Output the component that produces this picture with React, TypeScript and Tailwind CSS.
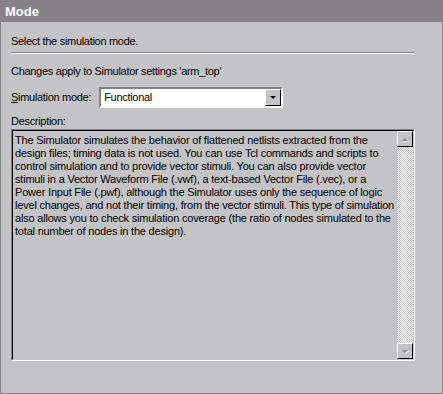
const lines = [
  'The Simulator simulates the behavior of flattened netlists extracted from the',
  'design files; timing data is not used. You can use Tcl commands and scripts to',
  'control simulation and to provide vector stimuli. You can also provide vector',
  'stimuli in a Vector Waveform File (.vwf), a text-based Vector File (.vec), or a',
  'Power Input File (.pwf), although the Simulator uses only the sequence of logic',
  'level changes, and not their timing, from the vector stimuli. This type of simulation',
  'also allows you to check simulation coverage (the ratio of nodes simulated to the',
  'total number of nodes in the design).',
];

function Arrow({ up, disabled }: { up?: boolean; disabled?: boolean }) {
  const pts = up ? '1,4 7,4 4,1' : '1,1 7,1 4,4';
  return (
    <svg width="8" height="5" viewBox="0 0 8 5">
      {disabled && <polygon points={pts} fill="#ffffff" transform="translate(1,1)" />}
      <polygon points={pts} fill={disabled ? '#858385' : '#000000'} />
    </svg>
  );
}

function ScrollButton({ up }: { up?: boolean }) {
  return (
    <div className="w-[16px] h-[16px] bg-[#c4c3c6] border border-t-white border-l-white border-r-black border-b-black flex items-center justify-center">
      <Arrow up={up} disabled />
    </div>
  );
}

export default function App() {
  return (
    <div className="w-[443px] h-[394px] flex flex-col bg-[#c4c3c6] text-[11px] leading-[13px] tracking-[-0.3px] text-black font-['Liberation_Sans',Arial,sans-serif]">
      <div className="h-[22px] bg-[#858385] text-white font-bold text-[13px] tracking-normal flex items-center px-[5px] shrink-0">
        Mode
      </div>
      <div className="flex-1 flex flex-col border-l border-r border-b border-[#858385] pl-[10px] pr-[27px]">
        <div className="mt-[13px]">Select the simulation mode.</div>
        <div className="mt-[4px] h-[2px] border-t border-[#858385] border-b border-b-white" />
        <div className="mt-[11px]">Changes apply to Simulator settings 'arm_top'</div>
        <div className="mt-[9px] flex items-center gap-[8px]">
          <span>
            <span className="underline">S</span>imulation mode:
          </span>
          <div className="w-[184px] h-[21px] bg-white border-2 border-t-[#858385] border-l-[#858385] border-r-white border-b-white flex items-center">
            <div className="flex-1 px-[2px] ml-[1px]">Functional</div>
            <div className="w-[16px] h-[17px] bg-[#c4c3c6] border border-t-white border-l-white border-r-black border-b-black flex items-center justify-center">
              <Arrow />
            </div>
          </div>
        </div>
        <div className="mt-[7px]">Description:</div>
        <div className="mt-[1px] h-[232px] flex border border-t-[#858385] border-l-[#858385] border-r-white border-b-white">
          <div className="flex-1 flex border border-t-black border-l-black border-r-[#c4c3c6] border-b-[#c4c3c6]">
            <div className="flex-1 pl-[2px] pt-[3px] tracking-[-0.2px]">
              {lines.map((l) => (
                <div key={l} className="whitespace-nowrap">{l}</div>
              ))}
            </div>
            <div className="w-[16px] flex flex-col">
              <ScrollButton up />
              <div className="flex-1 bg-[repeating-conic-gradient(#ffffff_0_25%,#c4c3c6_0_50%)] bg-[length:2px_2px]" />
              <ScrollButton />
            </div>
          </div>
        </div>
      </div>
    </div>
  );
}
